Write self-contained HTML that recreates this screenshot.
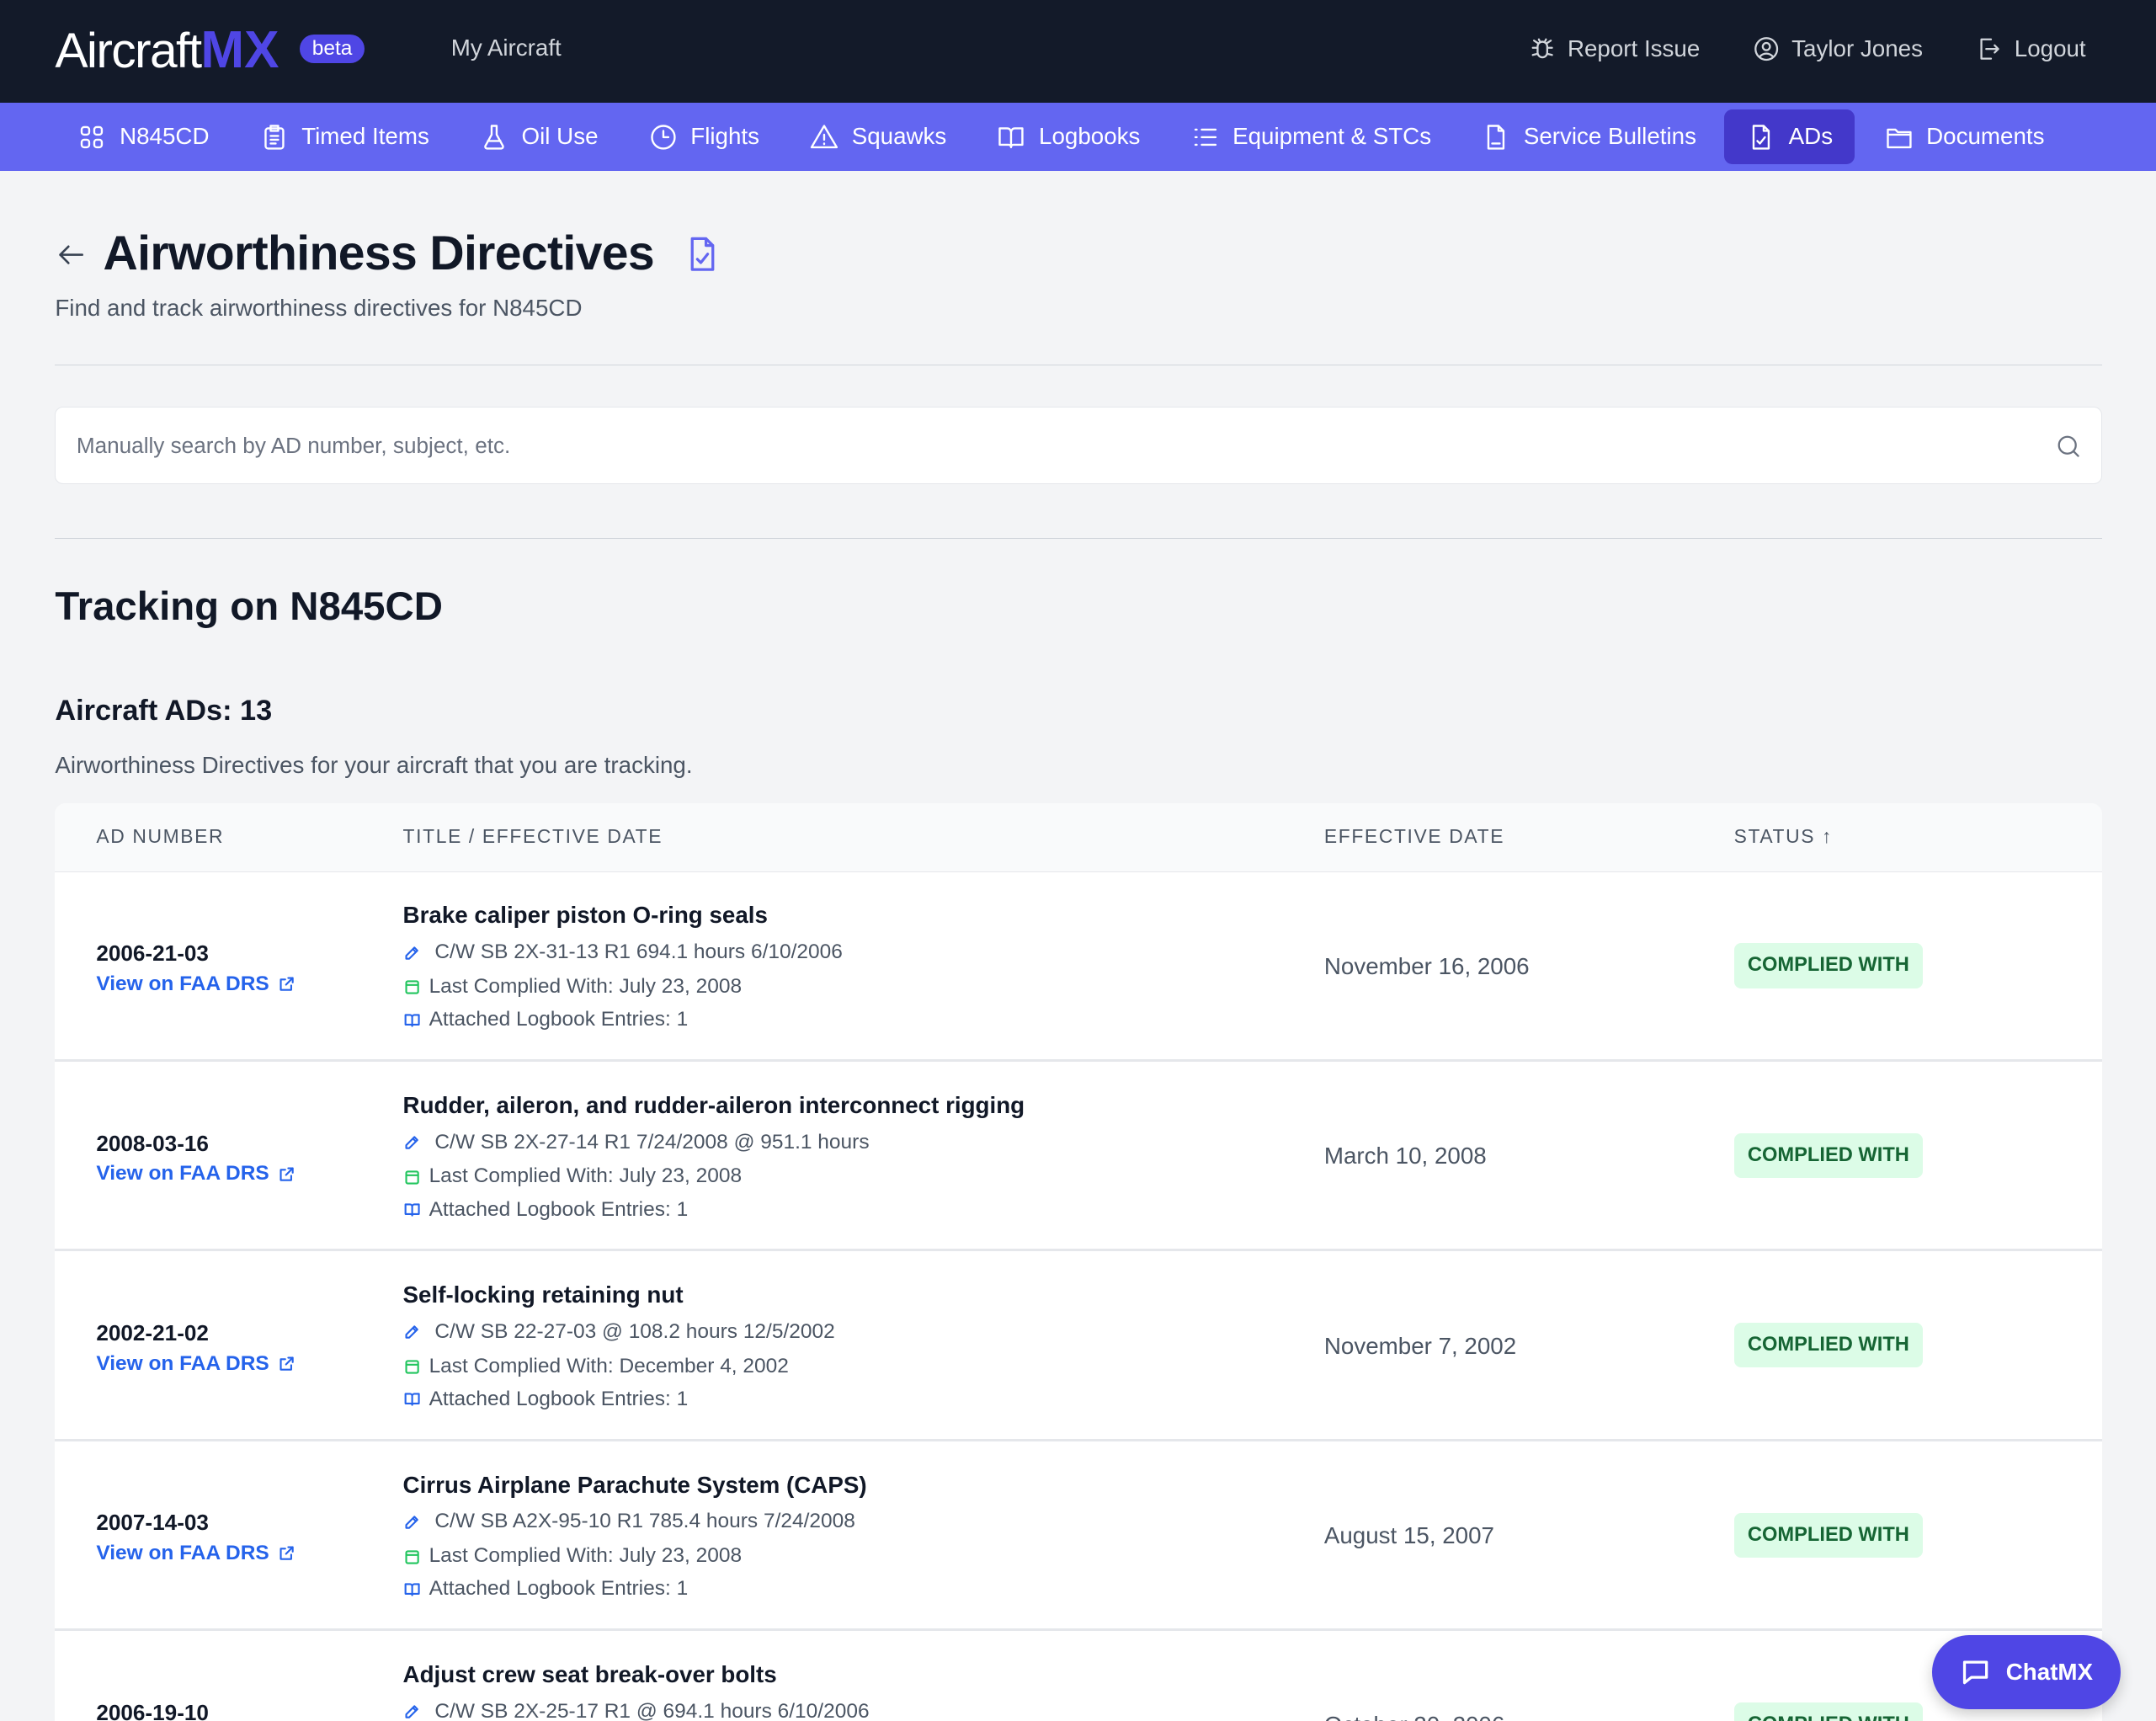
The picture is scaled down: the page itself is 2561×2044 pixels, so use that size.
<!DOCTYPE html>
<html><head><meta charset="utf-8"><style>
html{zoom:1.6333;overflow:hidden;height:1251px}
*{box-sizing:border-box;margin:0;padding:0}
body{width:1568px;height:1251px;overflow:hidden;background:#f3f4f6;font-family:"Liberation Sans",Arial,sans-serif;color:#111827;position:relative}
.top{height:75px;background:#131a29;position:relative}
.logo{position:absolute;left:40px;top:15px;font-size:36px;color:#fff;letter-spacing:-1px}
.logo b{color:#4f46e5;font-weight:700;letter-spacing:0;font-size:38px}
.beta{position:absolute;left:218px;top:25px;background:#4f46e5;color:#fff;font-size:15px;border-radius:12px;padding:2px 9px}
.tl{position:absolute;top:25px;font-size:17px;color:#d1d5db;display:flex;align-items:center;gap:8px}
.tl svg{width:21px;height:21px}
.nav{height:49px;background:#6366f1;display:flex;align-items:center;padding-left:46px;gap:0}
.ni{display:flex;align-items:center;gap:9px;color:#fff;font-size:17px;padding:9px 10px;margin-right:16.2px;border-radius:6px}
.ni svg{width:22px;height:22px}
.ni.act{background:#4338ca;margin-left:-6px;padding:9px 16px;margin-right:11px}
svg{fill:none;stroke:currentColor;stroke-width:1.6;stroke-linecap:round;stroke-linejoin:round}
.h1{position:absolute;left:75px;top:164px;font-size:35px;font-weight:700;letter-spacing:-0.4px}
.sub{position:absolute;left:40px;top:214px;font-size:17px;color:#4b5563}
.hr{position:absolute;left:40px;width:1489px;height:1px;background:#d1d5db}
.search{position:absolute;left:40px;top:296px;width:1489px;height:56px;background:#fff;border:1px solid #e5e7eb;border-radius:6px;font-size:16px;color:#6b7280;padding:18px 15px}
.h2{position:absolute;left:40px;top:424px;font-size:29px;font-weight:700}
.h3{position:absolute;left:40px;top:505px;font-size:21px;font-weight:700}
.p{position:absolute;left:40px;top:547px;font-size:17px;color:#4b5563}
.tbl{position:absolute;left:40px;top:584px;width:1489px;background:#fff;border-radius:8px 8px 0 0;overflow:hidden}
.th{height:50px;background:#f9fafb;border-bottom:1px solid #e5e7eb;position:relative;font-size:14px;letter-spacing:1px;color:#4b5563}
.th span{position:absolute;top:16px}
.row{height:138px;border-bottom:2px solid #e5e7eb;position:relative}
.adn{position:absolute;left:30px;top:50px;font-size:16px;font-weight:700}
.faa{position:absolute;left:30px;top:73px;font-size:15px;font-weight:700;color:#2563eb;display:flex;gap:6px;align-items:center}
.tt{position:absolute;left:253px;top:22px;font-size:17px;font-weight:700}
.ln{position:absolute;left:253px;font-size:15px;color:#4b5563;display:flex;align-items:center;gap:6px}
.ln svg{width:13px;height:13px}
.ed{position:absolute;left:923px;top:59px;font-size:17px;color:#4b5563}
.st{position:absolute;left:1221px;top:52px;background:#dcfce7;color:#166534;font-weight:700;font-size:14.5px;padding:8px 10px;border-radius:5px}
.chat{position:absolute;left:1405px;top:1189px;width:137px;height:54px;background:#4f46e5;border-radius:27px;color:#fff;font-weight:700;font-size:17px;display:flex;align-items:center;justify-content:center;gap:10px;box-shadow:0 4px 10px rgba(0,0,0,.2)}
</style></head><body>
<div class="top">
<div class="logo">Aircraft<b>MX</b></div><div class="beta">beta</div>
<div class="tl" style="left:328px">My Aircraft</div>
<div class="tl" style="left:1111px"><svg viewBox="0 0 24 24"><path d="M12 6a4 4 0 014 4v5a4 4 0 01-8 0v-5a4 4 0 014-4zM9 4l1 2M15 4l-1 2M4 11h4M16 11h4M4 17l4-1M20 17l-4-1M8 7 5 5M16 7l3-2"/></svg>Report Issue</div>
<div class="tl" style="left:1274px"><svg viewBox="0 0 24 24"><circle cx="12" cy="12" r="9"/><circle cx="12" cy="10" r="3"/><path d="M6.5 18.5a7 7 0 0111 0"/></svg>Taylor Jones</div>
<div class="tl" style="left:1436px"><svg viewBox="0 0 24 24"><path d="M14 4H6v16h8M10 12h10M17 9l3 3-3 3"/></svg>Logout</div>
</div>
<div class="nav">
<div class="ni" style="padding-left:10px"><svg viewBox="0 0 24 24"><rect x="4" y="4" width="6" height="6" rx="2"/><rect x="14" y="4" width="6" height="6" rx="2"/><rect x="4" y="14" width="6" height="6" rx="2"/><rect x="14" y="14" width="6" height="6" rx="2"/></svg>N845CD</div>
<div class="ni"><svg viewBox="0 0 24 24"><rect x="5" y="5" width="14" height="16" rx="2"/><path d="M9 3h6v4H9zM9 11h6M9 14h6M9 17h4"/></svg>Timed Items</div>
<div class="ni"><svg viewBox="0 0 24 24"><path d="M10 3h4M10 3v7l-5 9a1.5 1.5 0 001.3 2h11.4a1.5 1.5 0 001.3-2l-5-9V3M7 15h10"/></svg>Oil Use</div>
<div class="ni"><svg viewBox="0 0 24 24"><circle cx="12" cy="12" r="9"/><path d="M12 7v5h4"/></svg>Flights</div>
<div class="ni"><svg viewBox="0 0 24 24"><path d="M12 3 2 20h20zM12 10v4M12 17v.5"/></svg>Squawks</div>
<div class="ni"><svg viewBox="0 0 24 24"><path d="M3 5h6a3 3 0 013 3v12a2 2 0 00-2-2H3zM21 5h-6a3 3 0 00-3 3v12a2 2 0 012-2h7z"/></svg>Logbooks</div>
<div class="ni"><svg viewBox="0 0 24 24"><path d="M9 6h11M9 12h11M9 18h11M4 6h1M4 12h1M4 18h1"/></svg>Equipment &amp; STCs</div>
<div class="ni"><svg viewBox="0 0 24 24"><path d="M14 3H6v18h12V7zM14 3v4h4M9 17h6"/></svg>Service Bulletins</div>
<div class="ni act"><svg viewBox="0 0 24 24"><path d="M14 3H6v18h12V7zM14 3v4h4M9 15l2 2 4-5"/></svg>ADs</div>
<div class="ni"><svg viewBox="0 0 24 24"><path d="M3 6h6l2 2h10v12H3zM3 10h18"/></svg>Documents</div>
</div>
<svg style="position:absolute;left:40px;top:173px;width:24px;height:24px;color:#374151" viewBox="0 0 24 24"><path d="M20 12H4M10 6l-6 6 6 6"/></svg>
<div class="h1">Airworthiness Directives</div>
<svg style="position:absolute;left:496px;top:168px;width:30px;height:34px;color:#6366f1" viewBox="0 0 24 24"><path d="M14 3H6v18h12V7zM14 3v4h4M9 15l2 2 4-5"/></svg>
<div class="sub">Find and track airworthiness directives for N845CD</div>
<div class="hr" style="top:265px"></div>
<div class="search">Manually search by AD number, subject, etc.</div>
<svg style="position:absolute;left:1494px;top:314px;width:21px;height:21px;color:#6b7280" viewBox="0 0 24 24"><circle cx="11" cy="11" r="7"/><path d="M16 16l4 4"/></svg>
<div class="hr" style="top:391px"></div>
<div class="h2">Tracking on N845CD</div>
<div class="h3">Aircraft ADs: 13</div>
<div class="p">Airworthiness Directives for your aircraft that you are tracking.</div>
<div class="tbl">
<div class="th"><span style="left:30px">AD NUMBER</span><span style="left:253px">TITLE / EFFECTIVE DATE</span><span style="left:923px">EFFECTIVE DATE</span><span style="left:1221px">STATUS ↑</span></div>

<div class="row"><div class="adn">2006-21-03</div><div class="faa">View on FAA DRS <svg viewBox="0 0 24 24" width="13" height="13" style="stroke-width:2.4"><path d="M14 4h6v6M20 4l-9 9M18 14v6H4V6h6"/></svg></div>
<div class="tt">Brake caliper piston O-ring seals</div>
<div class="ln" style="top:50px"><svg viewBox="0 0 24 24" style="color:#2563eb;stroke-width:2.4"><path d="M4 20h4L19 9l-4-4L4 16zM13 7l4 4"/></svg>&nbsp;C/W SB 2X-31-13 R1 694.1 hours 6/10/2006</div>
<div class="ln" style="top:75px"><svg viewBox="0 0 24 24" style="color:#22c55e;stroke-width:2.4"><rect x="4" y="5" width="16" height="16" rx="2"/><path d="M4 10h16"/></svg>Last Complied With: July 23, 2008</div>
<div class="ln" style="top:99px"><svg viewBox="0 0 24 24" style="color:#2563eb;stroke-width:2.4"><path d="M3 5h6a3 3 0 013 3v12a2 2 0 00-2-2H3zM21 5h-6a3 3 0 00-3 3v12a2 2 0 012-2h7z"/></svg>Attached Logbook Entries: 1</div>
<div class="ed">November 16, 2006</div><div class="st">COMPLIED WITH</div></div>

<div class="row"><div class="adn">2008-03-16</div><div class="faa">View on FAA DRS <svg viewBox="0 0 24 24" width="13" height="13" style="stroke-width:2.4"><path d="M14 4h6v6M20 4l-9 9M18 14v6H4V6h6"/></svg></div>
<div class="tt">Rudder, aileron, and rudder-aileron interconnect rigging</div>
<div class="ln" style="top:50px"><svg viewBox="0 0 24 24" style="color:#2563eb;stroke-width:2.4"><path d="M4 20h4L19 9l-4-4L4 16zM13 7l4 4"/></svg>&nbsp;C/W SB 2X-27-14 R1 7/24/2008 @ 951.1 hours</div>
<div class="ln" style="top:75px"><svg viewBox="0 0 24 24" style="color:#22c55e;stroke-width:2.4"><rect x="4" y="5" width="16" height="16" rx="2"/><path d="M4 10h16"/></svg>Last Complied With: July 23, 2008</div>
<div class="ln" style="top:99px"><svg viewBox="0 0 24 24" style="color:#2563eb;stroke-width:2.4"><path d="M3 5h6a3 3 0 013 3v12a2 2 0 00-2-2H3zM21 5h-6a3 3 0 00-3 3v12a2 2 0 012-2h7z"/></svg>Attached Logbook Entries: 1</div>
<div class="ed">March 10, 2008</div><div class="st">COMPLIED WITH</div></div>

<div class="row"><div class="adn">2002-21-02</div><div class="faa">View on FAA DRS <svg viewBox="0 0 24 24" width="13" height="13" style="stroke-width:2.4"><path d="M14 4h6v6M20 4l-9 9M18 14v6H4V6h6"/></svg></div>
<div class="tt">Self-locking retaining nut</div>
<div class="ln" style="top:50px"><svg viewBox="0 0 24 24" style="color:#2563eb;stroke-width:2.4"><path d="M4 20h4L19 9l-4-4L4 16zM13 7l4 4"/></svg>&nbsp;C/W SB 22-27-03 @ 108.2 hours 12/5/2002</div>
<div class="ln" style="top:75px"><svg viewBox="0 0 24 24" style="color:#22c55e;stroke-width:2.4"><rect x="4" y="5" width="16" height="16" rx="2"/><path d="M4 10h16"/></svg>Last Complied With: December 4, 2002</div>
<div class="ln" style="top:99px"><svg viewBox="0 0 24 24" style="color:#2563eb;stroke-width:2.4"><path d="M3 5h6a3 3 0 013 3v12a2 2 0 00-2-2H3zM21 5h-6a3 3 0 00-3 3v12a2 2 0 012-2h7z"/></svg>Attached Logbook Entries: 1</div>
<div class="ed">November 7, 2002</div><div class="st">COMPLIED WITH</div></div>

<div class="row"><div class="adn">2007-14-03</div><div class="faa">View on FAA DRS <svg viewBox="0 0 24 24" width="13" height="13" style="stroke-width:2.4"><path d="M14 4h6v6M20 4l-9 9M18 14v6H4V6h6"/></svg></div>
<div class="tt">Cirrus Airplane Parachute System (CAPS)</div>
<div class="ln" style="top:50px"><svg viewBox="0 0 24 24" style="color:#2563eb;stroke-width:2.4"><path d="M4 20h4L19 9l-4-4L4 16zM13 7l4 4"/></svg>&nbsp;C/W SB A2X-95-10 R1 785.4 hours 7/24/2008</div>
<div class="ln" style="top:75px"><svg viewBox="0 0 24 24" style="color:#22c55e;stroke-width:2.4"><rect x="4" y="5" width="16" height="16" rx="2"/><path d="M4 10h16"/></svg>Last Complied With: July 23, 2008</div>
<div class="ln" style="top:99px"><svg viewBox="0 0 24 24" style="color:#2563eb;stroke-width:2.4"><path d="M3 5h6a3 3 0 013 3v12a2 2 0 00-2-2H3zM21 5h-6a3 3 0 00-3 3v12a2 2 0 012-2h7z"/></svg>Attached Logbook Entries: 1</div>
<div class="ed">August 15, 2007</div><div class="st">COMPLIED WITH</div></div>

<div class="row"><div class="adn">2006-19-10</div>
<div class="tt">Adjust crew seat break-over bolts</div>
<div class="ln" style="top:50px"><svg viewBox="0 0 24 24" style="color:#2563eb;stroke-width:2.4"><path d="M4 20h4L19 9l-4-4L4 16zM13 7l4 4"/></svg>&nbsp;C/W SB 2X-25-17 R1 @ 694.1 hours 6/10/2006</div>
<div class="ed">October 20, 2006</div><div class="st">COMPLIED WITH</div></div>
</div>
<div class="chat"><svg viewBox="0 0 24 24" width="24" height="24" style="stroke-width:2"><path d="M4 5h16v11H9l-5 4z"/></svg>ChatMX</div>
</body></html>
